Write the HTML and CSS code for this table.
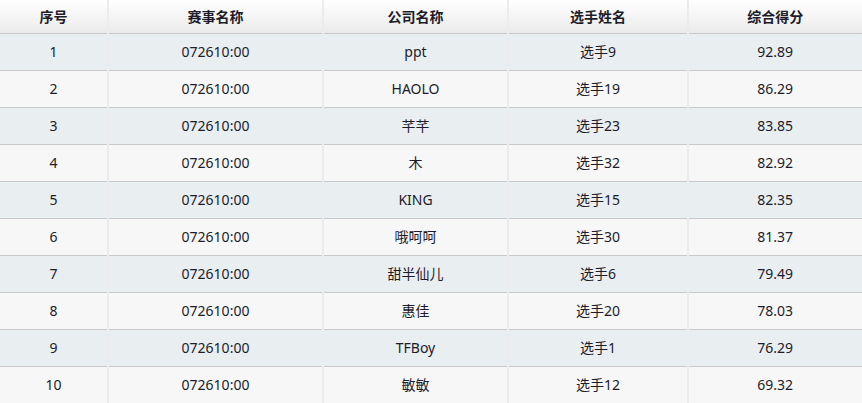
FILE: index.html
```html
<!DOCTYPE html>
<html lang="zh">
<head>
<meta charset="utf-8">
<title>排名</title>
<link rel="stylesheet" href="styles.css">
</head>
<body>
<table class="rank">
  <colgroup>
    <col class="c1"><col class="c2"><col class="c3"><col class="c4"><col class="c5">
  </colgroup>
  <thead>
    <tr><th>序号</th><th>赛事名称</th><th>公司名称</th><th>选手姓名</th><th>综合得分</th></tr>
  </thead>
  <tbody>
    <tr><td>1</td><td>072610:00</td><td>ppt</td><td>选手9</td><td>92.89</td></tr>
    <tr><td>2</td><td>072610:00</td><td>HAOLO</td><td>选手19</td><td>86.29</td></tr>
    <tr><td>3</td><td>072610:00</td><td>芊芊</td><td>选手23</td><td>83.85</td></tr>
    <tr><td>4</td><td>072610:00</td><td>木</td><td>选手32</td><td>82.92</td></tr>
    <tr><td>5</td><td>072610:00</td><td>KING</td><td>选手15</td><td>82.35</td></tr>
    <tr><td>6</td><td>072610:00</td><td>哦呵呵</td><td>选手30</td><td>81.37</td></tr>
    <tr><td>7</td><td>072610:00</td><td>甜半仙儿</td><td>选手6</td><td>79.49</td></tr>
    <tr><td>8</td><td>072610:00</td><td>惠佳</td><td>选手20</td><td>78.03</td></tr>
    <tr><td>9</td><td>072610:00</td><td>TFBoy</td><td>选手1</td><td>76.29</td></tr>
    <tr><td>10</td><td>072610:00</td><td>敏敏</td><td>选手12</td><td>69.32</td></tr>
  </tbody>
</table>
</body>
</html>
```
FILE: styles.css
```css
html, body {
  margin: 0;
  padding: 0;
  background: #ffffff;
}
.rank {
  width: 862px;
  border-collapse: collapse;
  table-layout: fixed;
  font-family: "Noto Sans", "Noto Sans CJK SC", sans-serif;
  font-size: 14px;
  color: #1c1c2a;
}
.c1 { width: 108px; }
.c2 { width: 215px; }
.c3 { width: 185px; }
.c4 { width: 180px; }
.c5 { width: 174px; }
.rank th,
.rank td {
  text-align: center;
  padding: 0;
  border-right: 2px solid #ececec;
  border-bottom: 1px solid #c9c9c9;
  line-height: 20px;
}
.rank th:last-child,
.rank td:last-child {
  border-right: 1px solid #e4e4e4;
}
.rank th {
  height: 33px;
  font-weight: bold;
  background: linear-gradient(#ffffff, #ebebeb);
}
.rank td {
  height: 36px;
}
.rank tbody tr:nth-child(odd) td { background: #e9eef1; }
.rank tbody tr:nth-child(even) td { background: #f7f7f7; }
```
